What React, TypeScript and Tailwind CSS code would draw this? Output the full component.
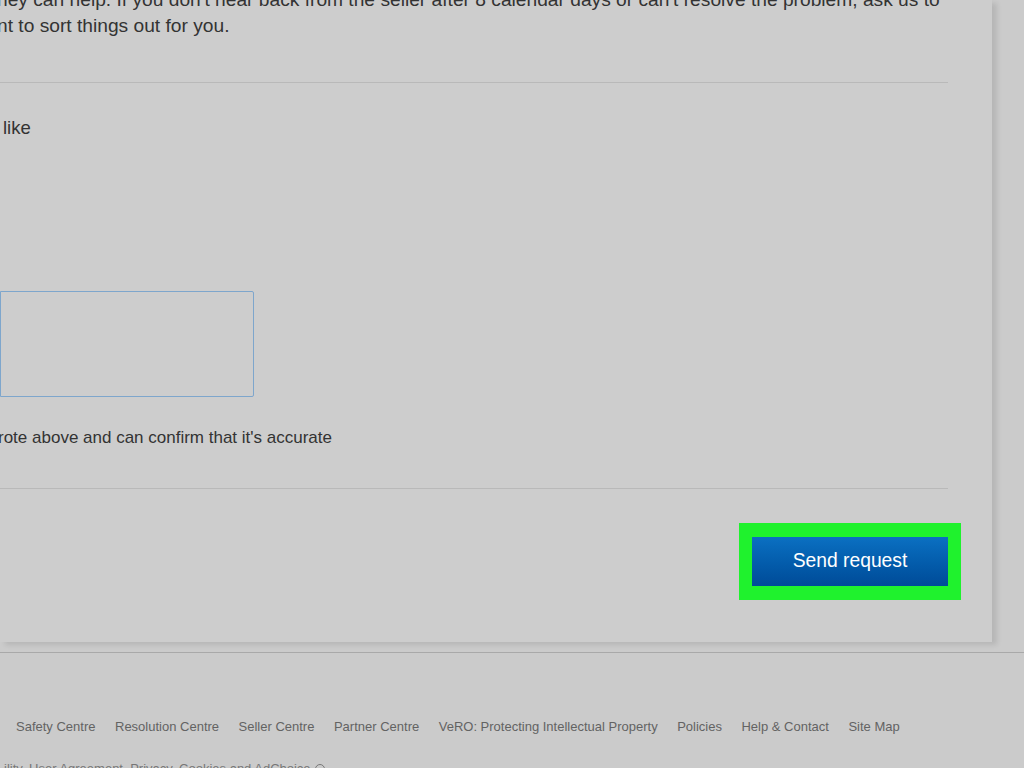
import React from 'react';

const footerLinks = [
  'Safety Centre',
  'Resolution Centre',
  'Seller Centre',
  'Partner Centre',
  'VeRO: Protecting Intellectual Property',
  'Policies',
  'Help & Contact',
  'Site Map',
];

export default function App() {
  return (
    <div
      className="h-[768px] w-[1024px] overflow-hidden bg-[#cbcbcb] text-[#333333]"
      style={{ fontFamily: '"Liberation Sans", Arial, sans-serif' }}
    >
      {/* form card */}
      <div className="h-[642px] w-[992px] overflow-hidden bg-[#cdcdcd] shadow-[5px_3px_5px_rgba(0,0,0,0.10)]">
        <div className="w-[948px] leading-[25px]">
          <div className="-mt-[13px] text-[19.2px]">
            <p className="-ml-[3px] whitespace-nowrap">
              hey can help. If you don't hear back from the seller after 8 calendar days or can't resolve the problem, ask us to
            </p>
            <p className="mt-[1px] -ml-[3px] whitespace-nowrap">nt to sort things out for you.</p>
          </div>

          <div className="mt-[44px] h-px bg-[#b9b9b9]" />

          <p className="mt-[32px] pl-[3px] text-[18.5px]">like</p>

          {/* description box */}
          <div className="mt-[151px] h-[106px] w-[254px] rounded-r-[2px] border border-[#7ea6cc] bg-[#cdcdcd]" />

          <p className="mt-[28px] -ml-[2px] whitespace-nowrap text-[17px]">
            rote above and can confirm that it's accurate
          </p>

          <div className="mt-[38px] h-px bg-[#b9b9b9]" />
        </div>

        <div className="mt-[34px] flex w-[961px] justify-end">
          <div className="bg-[#1ff22d] px-[13px] py-[14px]">
            <button className="flex h-[49px] w-[196px] items-center justify-center bg-gradient-to-b from-[#0b70c2] to-[#004b98] text-[19.3px] text-white">
              Send request
            </button>
          </div>
        </div>
      </div>

      {/* footer */}
      <div className="mt-[10px] border-t border-[#a9a9a9]">
        <nav className="mt-[66px] flex gap-[19.5px] pl-[16px] text-[13px] leading-[16px] text-[#636363]">
          {footerLinks.map((link) => (
            <span key={link} className="whitespace-nowrap">
              {link}
            </span>
          ))}
        </nav>
        <p className="mt-[26px] flex items-center gap-1 whitespace-nowrap pl-[4px] text-[13px] leading-[16px] text-[#777777]">
          <span>ility, User Agreement, Privacy, Cookies and AdChoice</span>
          <span className="inline-block h-[10px] w-[10px] rounded-full border border-[#777777]" />
        </p>
      </div>
    </div>
  );
}
